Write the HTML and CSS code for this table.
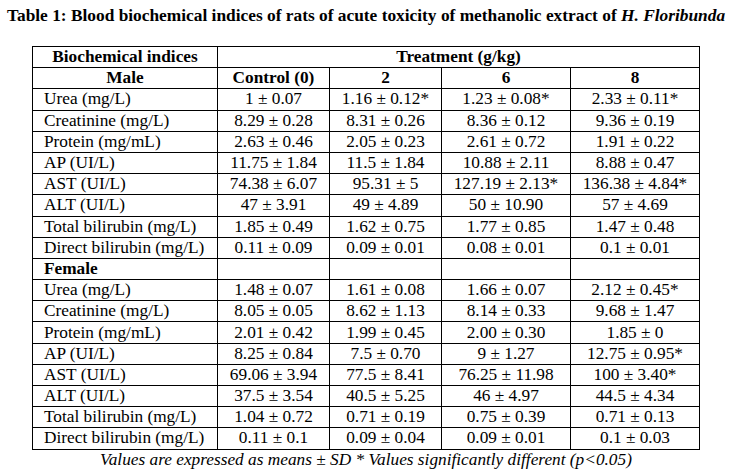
FILE: index.html
```html
<!DOCTYPE html>
<html>
<head>
<meta charset="utf-8">
<link rel="stylesheet" href="styles.css">
</head>
<body>
<p class="title">Table 1: Blood biochemical indices of rats of acute toxicity of methanolic extract of <i>H. Floribunda</i></p>
<div class="wrap">
<table class="data">
<colgroup><col class="c1"><col class="c2"><col class="c3"><col class="c4"><col class="c5"></colgroup>
<tr class="hd"><td class="center">Biochemical indices</td><td colspan="4" class="center">Treatment (g/kg)</td></tr>
<tr class="hd"><td class="center">Male</td><td>Control (0)</td><td>2</td><td>6</td><td>8</td></tr>
<tr><td class="lbl">Urea (mg/L)</td><td>1 ± 0.07</td><td>1.16 ± 0.12*</td><td>1.23 ± 0.08*</td><td>2.33 ± 0.11*</td></tr>
<tr><td class="lbl">Creatinine (mg/L)</td><td>8.29 ± 0.28</td><td>8.31 ± 0.26</td><td>8.36 ± 0.12</td><td>9.36 ± 0.19</td></tr>
<tr><td class="lbl">Protein (mg/mL)</td><td>2.63 ± 0.46</td><td>2.05 ± 0.23</td><td>2.61 ± 0.72</td><td>1.91 ± 0.22</td></tr>
<tr><td class="lbl">AP (UI/L)</td><td>11.75 ± 1.84</td><td>11.5 ± 1.84</td><td>10.88 ± 2.11</td><td>8.88 ± 0.47</td></tr>
<tr><td class="lbl">AST (UI/L)</td><td>74.38 ± 6.07</td><td>95.31 ± 5</td><td>127.19 ± 2.13*</td><td>136.38 ± 4.84*</td></tr>
<tr><td class="lbl">ALT (UI/L)</td><td>47 ± 3.91</td><td>49 ± 4.89</td><td>50 ± 10.90</td><td>57 ± 4.69</td></tr>
<tr><td class="lbl">Total bilirubin (mg/L)</td><td>1.85 ± 0.49</td><td>1.62 ± 0.75</td><td>1.77 ± 0.85</td><td>1.47 ± 0.48</td></tr>
<tr><td class="lbl">Direct bilirubin (mg/L)</td><td>0.11 ± 0.09</td><td>0.09 ± 0.01</td><td>0.08 ± 0.01</td><td>0.1 ± 0.01</td></tr>
<tr class="hd"><td class="lbl">Female</td><td></td><td></td><td></td><td></td></tr>
<tr><td class="lbl">Urea (mg/L)</td><td>1.48 ± 0.07</td><td>1.61 ± 0.08</td><td>1.66 ± 0.07</td><td>2.12 ± 0.45*</td></tr>
<tr><td class="lbl">Creatinine (mg/L)</td><td>8.05 ± 0.05</td><td>8.62 ± 1.13</td><td>8.14 ± 0.33</td><td>9.68 ± 1.47</td></tr>
<tr><td class="lbl">Protein (mg/mL)</td><td>2.01 ± 0.42</td><td>1.99 ± 0.45</td><td>2.00 ± 0.30</td><td>1.85 ± 0</td></tr>
<tr><td class="lbl">AP (UI/L)</td><td>8.25 ± 0.84</td><td>7.5 ± 0.70</td><td>9 ± 1.27</td><td>12.75 ± 0.95*</td></tr>
<tr><td class="lbl">AST (UI/L)</td><td>69.06 ± 3.94</td><td>77.5 ± 8.41</td><td>76.25 ± 11.98</td><td>100 ± 3.40*</td></tr>
<tr><td class="lbl">ALT (UI/L)</td><td>37.5 ± 3.54</td><td>40.5 ± 5.25</td><td>46 ± 4.97</td><td>44.5 ± 4.34</td></tr>
<tr><td class="lbl">Total bilirubin (mg/L)</td><td>1.04 ± 0.72</td><td>0.71 ± 0.19</td><td>0.75 ± 0.39</td><td>0.71 ± 0.13</td></tr>
<tr><td class="lbl">Direct bilirubin (mg/L)</td><td>0.11 ± 0.1</td><td>0.09 ± 0.04</td><td>0.09 ± 0.01</td><td>0.1 ± 0.03</td></tr>
</table>
<p class="note">Values are expressed as means ± SD * Values significantly different (p&lt;0.05)</p>
</div>
</body>
</html>
```

FILE: styles.css
```css
html, body {
  margin: 0;
  background: #ffffff;
}
body {
  padding: 6px 0 0 7px;
  font-family: "Liberation Serif", "Times New Roman", serif;
  color: #000000;
}
.title {
  margin: 0;
  font-size: 17.35px;
  line-height: 20px;
  font-weight: bold;
  white-space: nowrap;
}
.wrap {
  margin: 20px 0 0 25px;
  width: 668px;
}
.data {
  width: 668px;
  table-layout: fixed;
  border-collapse: collapse;
  font-size: 17.3px;
}
.c1 { width: 185px; }
.c2 { width: 112px; }
.c3 { width: 112px; }
.c4 { width: 129px; }
.c5 { width: 129px; }
.data td {
  border: 1px solid #000000;
  height: 21.2px;
  padding: 0;
  line-height: 20px;
  text-align: center;
  white-space: nowrap;
  box-sizing: border-box;
}
.data td.lbl {
  text-align: left;
  padding-left: 11px;
}
.data tr.hd td {
  font-weight: bold;
}
.note {
  margin: 0;
  font-size: 17.3px;
  line-height: 20px;
  font-style: italic;
  text-align: center;
}
```
